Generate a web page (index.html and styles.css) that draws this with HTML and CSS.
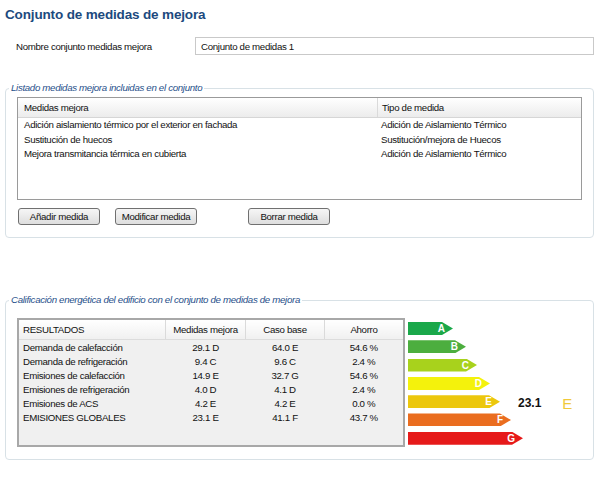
FILE: index.html
```html
<!DOCTYPE html>
<html>
	<head>
		<meta charset="utf-8">
		<link rel="stylesheet" href="styles.css">
		<title>Conjunto de medidas de mejora</title>
	</head>
	<body>
		<h1 class="title">Conjunto de medidas de mejora</h1>
		<div class="name-row">
			<span class="name-label">Nombre conjunto medidas mejora</span>
			<input class="name-input" type="text" value="Conjunto de medidas 1">
		</div>

		<fieldset class="group group-list">
			<legend>Listado medidas mejora incluidas en el conjunto</legend>
			<div class="list">
				<div class="list-head">
					<div class="col-name">Medidas mejora</div>
					<div class="col-type">Tipo de medida</div>
				</div>
				<div class="list-row">
					<div class="col-name">Adición aislamiento térmico por el exterior en fachada</div>
					<div class="col-type">Adición de Aislamiento Térmico</div>
				</div>
				<div class="list-row">
					<div class="col-name">Sustitución de huecos</div>
					<div class="col-type">Sustitución/mejora de Huecos</div>
				</div>
				<div class="list-row">
					<div class="col-name">Mejora transmitancia térmica en cubierta</div>
					<div class="col-type">Adición de Aislamiento Térmico</div>
				</div>
			</div>
			<div class="buttons">
				<button class="btn">Añadir medida</button>
				<button class="btn">Modificar medida</button>
				<button class="btn btn-far">Borrar medida</button>
			</div>
		</fieldset>

		<fieldset class="group group-results">
			<legend>Calificación energética del edificio con el conjunto de medidas de mejora</legend>
			<div class="results">
				<div class="results-box">
					<table class="results-table">
						<tr class="head">
							<th class="first">RESULTADOS</th>
							<th>Medidas mejora</th>
							<th>Caso base</th>
							<th class="last">Ahorro</th>
						</tr>
						<tr class="top"><td class="first">Demanda de calefacción</td><td>29.1 D</td><td>64.0 E</td><td>54.6 %</td></tr>
						<tr><td class="first">Demanda de refrigeración</td><td>9.4 C</td><td>9.6 C</td><td>2.4 %</td></tr>
						<tr><td class="first">Emisiones de calefacción</td><td>14.9 E</td><td>32.7 G</td><td>54.6 %</td></tr>
						<tr><td class="first">Emisiones de refrigeración</td><td>4.0 D</td><td>4.1 D</td><td>2.4 %</td></tr>
						<tr><td class="first">Emisiones de ACS</td><td>4.2 E</td><td>4.2 E</td><td>0.0 %</td></tr>
						<tr><td class="first">EMISIONES GLOBALES</td><td>23.1 E</td><td>41.1 F</td><td>43.7 %</td></tr>
					</table>
				</div>
				<div class="scale">
					<div class="scale-row"><div class="bar bar-a" style="width:45px">A</div></div>
					<div class="scale-row"><div class="bar bar-b" style="width:58px">B</div></div>
					<div class="scale-row"><div class="bar bar-c" style="width:69px">C</div></div>
					<div class="scale-row"><div class="bar bar-d" style="width:82px">D</div></div>
					<div class="scale-row">
						<div class="bar bar-e" style="width:92px">E</div>
						<span class="value">23.1</span>
						<span class="grade">E</span>
					</div>
					<div class="scale-row"><div class="bar bar-f" style="width:103px">F</div></div>
					<div class="scale-row"><div class="bar bar-g" style="width:115px">G</div></div>
				</div>
			</div>
		</fieldset>
	</body>
</html>
```

FILE: styles.css
```css
body { margin:0; font-family:"Liberation Sans", Arial, sans-serif; font-size:9.7px; letter-spacing:-0.32px; color:#111; background:#fff; }

.title { margin:0; padding:5px 5px 0; font-size:13.5px; letter-spacing:-0.15px; line-height:19px; font-weight:bold; color:#1c4a7e; }

.name-row { display:flex; align-items:center; margin-top:13px; padding-left:16px; height:18px; }
.name-label { width:179px; }
.name-input { box-sizing:border-box; width:399px; height:18px; margin:0; padding:0 5px; border:1px solid #c9c9c9; font-family:inherit; font-size:9.7px; letter-spacing:-0.32px; color:#111; }

.group { margin:0 6px 0 5px; padding:3px 11px 12px 11px; border:1px solid #d8e1e6; border-radius:4px; }
.group legend { padding:0 2px; margin-left:-8px; font-style:italic; color:#1f4f8a; line-height:12px; }
.group-list { margin-top:27px; }
.group-results { margin-top:56px; padding-top:12px; }

.list { height:101px; border:1px solid #9a9a9a; background:#fff; }
.list-head { display:flex; height:19px; line-height:19px; background:linear-gradient(#ffffff, #ececec); border-bottom:1px solid #d6d6d6; }
.list-head .col-name { border-right:1px solid #dadada; }
.list-row { display:flex; height:14.5px; line-height:14.5px; }
.col-name { width:353px; padding-left:6px; white-space:nowrap; }
.col-type { padding-left:4px; white-space:nowrap; }

.buttons { display:flex; margin-top:8px; }
.btn { box-sizing:border-box; width:82px; height:17px; margin:0 14px 0 1px; padding:0; border:1px solid #707070; border-radius:3px; background:linear-gradient(#f6f6f6, #dedede); font-family:inherit; font-size:9.7px; letter-spacing:-0.32px; color:#111; white-space:nowrap; }
.btn-far { margin-left:37px; }

.results { display:flex; align-items:flex-start; }
.results-box { box-sizing:border-box; width:388px; height:129px; border:2px solid #a8a8a8; background:#f0f0f0; }
.results-table { width:100%; border-collapse:collapse; white-space:nowrap; }
.results-table th { height:19px; padding:0; font-weight:normal; text-align:center; background:linear-gradient(#ffffff, #f0f0f0); border-bottom:1px solid #dcdcdc; border-right:1px solid #dadada; }
.results-table th.last { border-right:none; }
.results-table td { height:14px; padding:0; text-align:center; line-height:14px; }
.results-table tr.top td { padding-top:1px; }
.results-table .first { text-align:left; padding-left:4px; width:142px; }
.results-table th:nth-child(2) { width:79px; }
.results-table th:nth-child(3) { width:78px; }

.scale { display:flex; flex-direction:column; gap:5.3px; margin-left:3px; padding-top:4px; }
.scale-row { display:flex; align-items:center; height:13px; }
.bar { box-sizing:border-box; height:13px; padding-right:8px; text-align:right; line-height:13px; color:#fff; font-weight:bold; font-size:10px; letter-spacing:0; clip-path:polygon(0 0, calc(100% - 11px) 0, 100% 50%, calc(100% - 11px) 100%, 0 100%); }
.bar-a { background:#1aa84a; }
.bar-b { background:#4cae3f; }
.bar-c { background:#a8d21c; }
.bar-d { background:#f4f20c; }
.bar-e { background:#ecc70c; }
.bar-f { background:#ea6d1f; }
.bar-g { background:#e61a1a; }
.value { margin-left:18px; margin-top:3px; font-weight:bold; font-size:12px; letter-spacing:0; color:#111; }
.grade { margin-left:21px; margin-top:3px; font-size:15px; letter-spacing:0; color:#f0c93a; }
```
